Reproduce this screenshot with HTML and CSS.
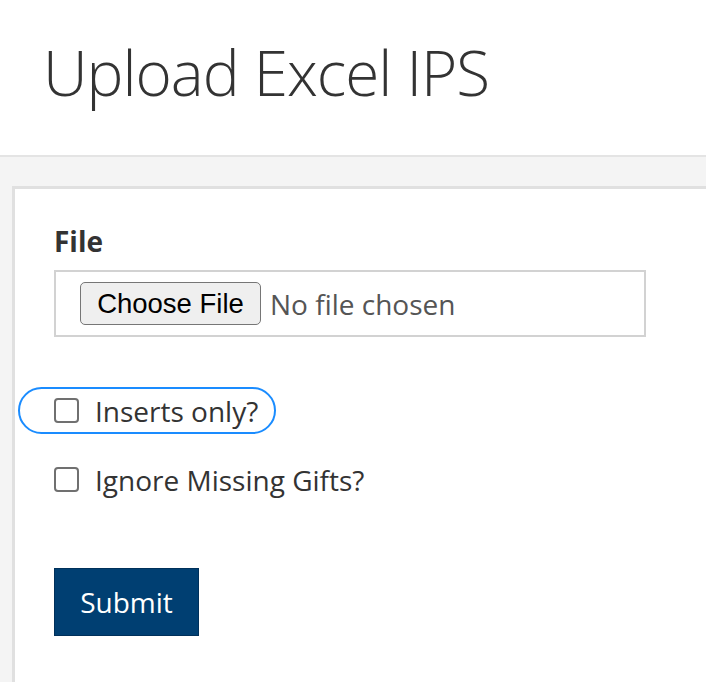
FILE: index.html
```html
<!DOCTYPE html>
<html lang="en">
<head>
<meta charset="utf-8">
<title>Upload Excel IPS</title>
<link rel="stylesheet" href="styles.css">
</head>
<body>
<header class="page-header">
  <h1 class="page-title">Upload Excel IPS</h1>
</header>
<main class="page-body">
  <section class="card">
    <form class="upload-form">
      <div class="field">
        <label class="field-label" for="file">File</label>
        <div class="file-box">
          <span class="file-button">Choose File</span>
          <span class="file-status">No file chosen</span>
        </div>
      </div>
      <label class="check-row is-focused">
        <span class="check-box"></span>
        <span class="check-text">Inserts only?</span>
      </label>
      <label class="check-row">
        <span class="check-box"></span>
        <span class="check-text">Ignore Missing Gifts?</span>
      </label>
      <div class="actions">
        <button type="button" class="submit-btn">Submit</button>
      </div>
    </form>
  </section>
</main>
</body>
</html>
```
FILE: styles.css
```css
* { box-sizing: border-box; }
html, body { margin: 0; padding: 0; }
body {
  font-family: "Open Sans", "Noto Sans", sans-serif;
  color: #333;
  background: #f4f4f4;
  height: 682px;
  overflow: hidden;
}
.page-header {
  background: #fff;
  height: 157px;
  border-bottom: 2px solid #e4e4e4;
  padding-left: 43px;
  padding-top: 32px;
}
.page-title {
  margin: 0;
  font-weight: 300;
  font-size: 62px;
  line-height: 80px;
  color: #333;
  letter-spacing: -1px;
}
.page-body {
  padding: 29px 0 0 12px;
}
.card {
  background: #fff;
  border-top: 3px solid #e0e0e0;
  border-left: 3px solid #e0e0e0;
  min-height: 520px;
  padding: 32px 0 0 39px;
}
.upload-form {
  display: flex;
  flex-direction: column;
}
.field-label {
  display: block;
  font-weight: 700;
  font-size: 28px;
  line-height: 40px;
  margin-bottom: 9px;
}
.file-box {
  width: 592px;
  height: 67px;
  border: 2px solid #d2d2d2;
  display: flex;
  align-items: center;
  padding-left: 24px;
  gap: 9px;
}
.file-button {
  font-family: "Liberation Sans", Arial, sans-serif;
  font-size: 27.5px;
  color: #000;
  background: #efefef;
  border: 1.5px solid #767676;
  border-radius: 5px;
  height: 43px;
  width: 181px;
  display: flex;
  align-items: center;
  justify-content: center;
}
.file-status {
  font-size: 28px;
  color: #555;
}
.check-row {
  display: flex;
  align-items: center;
  gap: 16px;
  align-self: flex-start;
  margin-left: -36px;
  padding: 0 16px 0 34px;
  height: 47px;
  border: 2px solid transparent;
  border-radius: 24px;
  font-size: 28px;
  color: #333;
}
.check-row.is-focused {
  border-color: #1a8cff;
  margin-top: 50px;
}
.check-row + .check-row {
  margin-top: 22px;
}
.check-box {
  width: 25px;
  height: 25px;
  border: 2px solid #707070;
  border-radius: 4px;
  background: #fff;
  flex: none;
}
.actions {
  margin-top: 65px;
}
.submit-btn {
  font-family: "Open Sans", "Noto Sans", sans-serif;
  font-size: 28px;
  color: #fff;
  background: #003f72;
  border: 1px solid #00305a;
  border-radius: 0;
  width: 145px;
  height: 68px;
  padding: 0;
}
```
